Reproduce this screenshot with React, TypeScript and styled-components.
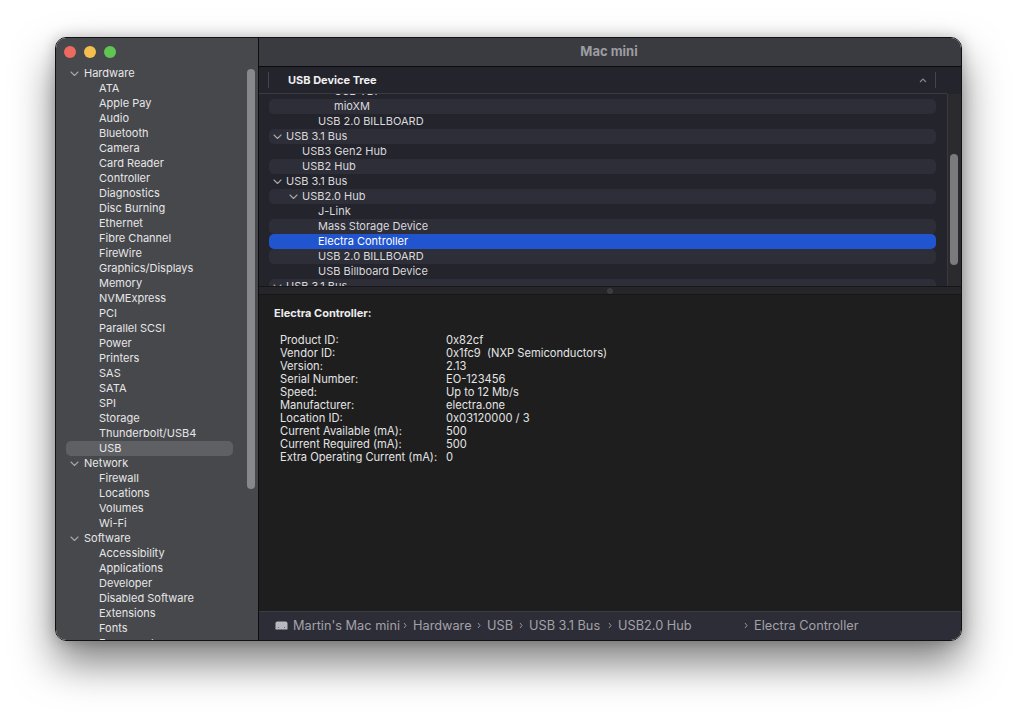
import React from 'react';
import styled, { createGlobalStyle } from 'styled-components';

const GlobalStyle = createGlobalStyle`
	html, body {
		margin: 0;
		height: 100%;
		background: #ffffff;
		overflow: hidden;
	}
	body {
		font-family: Inter, "Liberation Sans", sans-serif;
	}
`;

const Page = styled.main`
	width: 1017px;
	height: 714px;
	padding: 37px 55px 73px 55px;
	box-sizing: border-box;
`;

const Window = styled.div`
	width: 907px;
	height: 604px;
	box-sizing: border-box;
	display: flex;
	border: 1px solid #111114;
	border-radius: 11px;
	overflow: hidden;
	box-shadow: 0 22px 42px rgba(0, 0, 0, 0.5), 0 0 14px rgba(0, 0, 0, 0.22);
`;

const Sidebar = styled.aside`
	position: relative;
	width: 202px;
	flex: none;
	background: #47484c;
	border-right: 1px solid #0e0e10;
	overflow: hidden;
`;

const Lights = styled.div`
	display: flex;
	gap: 8px;
	padding: 8px 0 0 8px;
	height: 20px;
	box-sizing: border-box;
	margin-bottom: 8px;
`;

const Light = styled.span<{ $color: string }>`
	width: 12px;
	height: 12px;
	border-radius: 50%;
	background: ${(p) => p.$color};
`;

const SideRow = styled.div<{ $group?: boolean; $selected?: boolean }>`
	height: 15px;
	line-height: 15px;
	margin: 0 25px 0 10px;
	padding-left: ${(p) => (p.$group ? '18px' : '33px')};
	display: flex;
	align-items: center;
	position: relative;
	font-size: 11px;
	color: #e6e6e7;
	border-radius: 5px;
	background: ${(p) => (p.$selected ? '#5f6063' : 'transparent')};
	white-space: nowrap;
`;

const SideChevron = styled.svg`
	position: absolute;
	left: 4px;
	top: 5px;
	width: 9px;
	height: 6px;
`;

const SideThumb = styled.div`
	position: absolute;
	right: 3px;
	top: 31px;
	width: 8px;
	height: 420px;
	border-radius: 4px;
	background: #87888a;
`;

const Content = styled.section`
	flex: 1;
	min-width: 0;
	display: flex;
	flex-direction: column;
`;

const TitleBar = styled.header`
	height: 29px;
	flex: none;
	box-sizing: border-box;
	padding: 0 2px 2px 0;
	display: flex;
	align-items: center;
	justify-content: center;
	background: #3a3b40;
	border-bottom: 1px solid #0b0b0d;
	color: #9c9da1;
	font-size: 13px;
	font-weight: 700;
`;

const TreePane = styled.div`
	position: relative;
	height: 219px;
	flex: none;
	display: flex;
	flex-direction: column;
	background: #24242c;
	overflow: hidden;
`;

const TreeHeader = styled.div`
	height: 27px;
	flex: none;
	box-sizing: border-box;
	margin-right: 14px;
	padding: 0 20px 0 9px;
	display: flex;
	align-items: center;
	border-bottom: 1px solid #3a3a43;
	color: #f0f0f2;
	font-size: 11px;
	font-weight: 700;
`;

const HeaderTick = styled.span`
	width: 1px;
	height: 16px;
	background: #45454d;
	margin-right: 19px;
`;

const HeaderLabel = styled.span`
	flex: 1;
`;

const HeaderCaret = styled.svg`
	width: 8px;
	height: 5px;
	margin-right: 8px;
`;

const HeaderEnd = styled.span`
	width: 1px;
	height: 16px;
	background: #45454d;
	margin-right: -9px;
`;

const TreeClip = styled.div`
	flex: 1;
	min-height: 0;
	overflow: hidden;
	margin-right: 14px;
	padding: 0 11px 0 10px;
`;

/* the list is scrolled: the first row sits partly under the header */
const TreeList = styled.div`
	margin-top: -10px;
`;

const TreeRow = styled.div<{ $depth: number; $striped: boolean; $selected?: boolean }>`
	position: relative;
	height: 15px;
	line-height: 15px;
	padding-left: ${(p) => 17 + p.$depth * 16}px;
	border-radius: 5px;
	font-size: 11px;
	white-space: nowrap;
	color: ${(p) => (p.$selected ? '#ffffff' : '#d9d9dc')};
	background: ${(p) => (p.$selected ? '#2154cf' : p.$striped ? '#2e2e38' : 'transparent')};
`;

const TreeChevron = styled.svg<{ $depth: number }>`
	position: absolute;
	top: 5px;
	left: ${(p) => 4 + p.$depth * 16}px;
	width: 9px;
	height: 6px;
`;

const TreeGutter = styled.div`
	position: absolute;
	right: 0;
	top: 27px;
	bottom: 0;
	width: 14px;
	box-sizing: border-box;
	background: #2b2b2d;
	border-left: 1px solid #3a3a3e;
`;

const TreeThumb = styled.div`
	position: absolute;
	right: 3px;
	top: 87px;
	width: 8px;
	height: 111px;
	border-radius: 4px;
	background: #7b7b7d;
`;

const Splitter = styled.div`
	height: 9px;
	flex: none;
	box-sizing: border-box;
	display: flex;
	align-items: center;
	justify-content: center;
	background: #26262a;
	border-top: 1px solid #161618;
	border-bottom: 1px solid #161618;
`;

const SplitterDot = styled.span`
	width: 6px;
	height: 6px;
	border-radius: 50%;
	background: #3c3c40;
`;

const Details = styled.div`
	flex: 1;
	min-height: 0;
	padding: 12px 15px;
	background: #1e1e1e;
	color: #e4e4e5;
	font-size: 11.15px;
`;

const DetailsTitle = styled.h2`
	margin: 0 0 14px;
	height: 13px;
	line-height: 13px;
	font-size: 11px;
	font-weight: 700;
	color: #ececed;
`;

const Facts = styled.dl`
	margin: 0;
	padding-left: 6px;
	display: grid;
	grid-template-columns: 166px 1fr;
	grid-auto-rows: 13px;
	line-height: 13px;
`;

const FactLabel = styled.dt`
	white-space: nowrap;
`;

const FactValue = styled.dd`
	margin: 0;
	white-space: pre;
`;

const PathBar = styled.footer`
	height: 29px;
	flex: none;
	box-sizing: border-box;
	padding: 0 0 1px 16px;
	display: flex;
	align-items: center;
	background: #2d2d37;
	border-top: 1px solid #3c3c45;
	color: #a2a2a7;
	font-size: 12.75px;
	white-space: nowrap;
`;

const MiniIcon = styled.svg`
	width: 13px;
	height: 9px;
	margin-right: 5px;
	flex: none;
`;

const Crumb = styled.span<{ $width?: number }>`
	${(p) => (p.$width ? `width: ${p.$width}px;` : '')}
`;

const Separator = styled.svg`
	width: 4px;
	height: 7px;
	margin: 0 6px 0 5px;
	flex: none;
`;

const chevron = (
	<path d="M1 1l3.5 3.5L8 1" fill="none" stroke="#a6a7aa" strokeWidth="1.1" strokeLinecap="round" strokeLinejoin="round" />
);

const sidebar: { label: string; group?: boolean; selected?: boolean }[] = [
	{ label: 'Hardware', group: true },
	{ label: 'ATA' },
	{ label: 'Apple Pay' },
	{ label: 'Audio' },
	{ label: 'Bluetooth' },
	{ label: 'Camera' },
	{ label: 'Card Reader' },
	{ label: 'Controller' },
	{ label: 'Diagnostics' },
	{ label: 'Disc Burning' },
	{ label: 'Ethernet' },
	{ label: 'Fibre Channel' },
	{ label: 'FireWire' },
	{ label: 'Graphics/Displays' },
	{ label: 'Memory' },
	{ label: 'NVMExpress' },
	{ label: 'PCI' },
	{ label: 'Parallel SCSI' },
	{ label: 'Power' },
	{ label: 'Printers' },
	{ label: 'SAS' },
	{ label: 'SATA' },
	{ label: 'SPI' },
	{ label: 'Storage' },
	{ label: 'Thunderbolt/USB4' },
	{ label: 'USB', selected: true },
	{ label: 'Network', group: true },
	{ label: 'Firewall' },
	{ label: 'Locations' },
	{ label: 'Volumes' },
	{ label: 'Wi-Fi' },
	{ label: 'Software', group: true },
	{ label: 'Accessibility' },
	{ label: 'Applications' },
	{ label: 'Developer' },
	{ label: 'Disabled Software' },
	{ label: 'Extensions' },
	{ label: 'Fonts' },
	{ label: 'Frameworks' },
];

const tree: { label: string; depth: number; open?: boolean; selected?: boolean }[] = [
	{ label: 'USB TDI', depth: 3 },
	{ label: 'mioXM', depth: 3 },
	{ label: 'USB 2.0 BILLBOARD', depth: 2 },
	{ label: 'USB 3.1 Bus', depth: 0, open: true },
	{ label: 'USB3 Gen2 Hub', depth: 1 },
	{ label: 'USB2 Hub', depth: 1 },
	{ label: 'USB 3.1 Bus', depth: 0, open: true },
	{ label: 'USB2.0 Hub', depth: 1, open: true },
	{ label: 'J-Link', depth: 2 },
	{ label: 'Mass Storage Device', depth: 2 },
	{ label: 'Electra Controller', depth: 2, selected: true },
	{ label: 'USB 2.0 BILLBOARD', depth: 2 },
	{ label: 'USB Billboard Device', depth: 2 },
	{ label: 'USB 3.1 Bus', depth: 0, open: true },
];

const facts: [string, string][] = [
	['Product ID:', '0x82cf'],
	['Vendor ID:', '0x1fc9  (NXP Semiconductors)'],
	['Version:', '2.13'],
	['Serial Number:', 'EO-123456'],
	['Speed:', 'Up to 12 Mb/s'],
	['Manufacturer:', 'electra.one'],
	['Location ID:', '0x03120000 / 3'],
	['Current Available (mA):', '500'],
	['Current Required (mA):', '500'],
	['Extra Operating Current (mA):', '0'],
];

const crumbs: { label: string; width: number }[] = [
	{ label: "Martin's Mac mini", width: 105 },
	{ label: 'Hardware', width: 59 },
	{ label: 'USB', width: 27 },
	{ label: 'USB 3.1 Bus', width: 74 },
	{ label: 'USB2.0 Hub', width: 121 },
];

function App() {
	return (
		<Page>
			<GlobalStyle />
			<Window>
				<Sidebar>
					<Lights>
						<Light $color="#ed6a5e" />
						<Light $color="#f4bf4f" />
						<Light $color="#61c554" />
					</Lights>
					{sidebar.map(({ label, group, selected }) => (
						<SideRow key={label} $group={group} $selected={selected}>
							{group && <SideChevron viewBox="0 0 9 6">{chevron}</SideChevron>}
							{label}
						</SideRow>
					))}
					<SideThumb />
				</Sidebar>
				<Content>
					<TitleBar>Mac mini</TitleBar>
					<TreePane>
						<TreeHeader>
							<HeaderTick />
							<HeaderLabel>USB Device Tree</HeaderLabel>
							<HeaderCaret viewBox="0 0 8 5">
								<path d="M1 4l3-3 3 3" fill="none" stroke="#85858c" strokeWidth="1.2" />
							</HeaderCaret>
							<HeaderEnd />
						</TreeHeader>
						<TreeClip>
							<TreeList>
								{tree.map(({ label, depth, open, selected }, i) => (
									<TreeRow key={i} $depth={depth} $striped={i % 2 === 1} $selected={selected}>
										{open && (
											<TreeChevron viewBox="0 0 9 6" $depth={depth}>
												{chevron}
											</TreeChevron>
										)}
										{label}
									</TreeRow>
								))}
							</TreeList>
						</TreeClip>
						<TreeGutter />
						<TreeThumb />
					</TreePane>
					<Splitter>
						<SplitterDot />
					</Splitter>
					<Details>
						<DetailsTitle>Electra Controller:</DetailsTitle>
						<Facts>
							{facts.map(([label, value]) => (
								<React.Fragment key={label}>
									<FactLabel>{label}</FactLabel>
									<FactValue>{value}</FactValue>
								</React.Fragment>
							))}
						</Facts>
					</Details>
					<PathBar>
						<MiniIcon viewBox="0 0 13 9">
							<path d="M2.5 0.5h8c1.2 0 2 .9 2 2V8.5H.5V2.5c0-1.1.8-2 2-2z" fill="#b9b9bd" />
							<path d="M3 6.5h1M9 6.5h1" stroke="#55555c" strokeWidth="0.8" />
						</MiniIcon>
						{crumbs.map(({ label, width }) => (
							<React.Fragment key={label}>
								<Crumb $width={width}>{label}</Crumb>
								<Separator viewBox="0 0 4 7">
									<path d="M1 1l2 2.5L1 6" fill="none" stroke="#a2a2a7" strokeWidth="0.9" />
								</Separator>
							</React.Fragment>
						))}
						<Crumb>Electra Controller</Crumb>
					</PathBar>
				</Content>
			</Window>
		</Page>
	);
}

export default App;
